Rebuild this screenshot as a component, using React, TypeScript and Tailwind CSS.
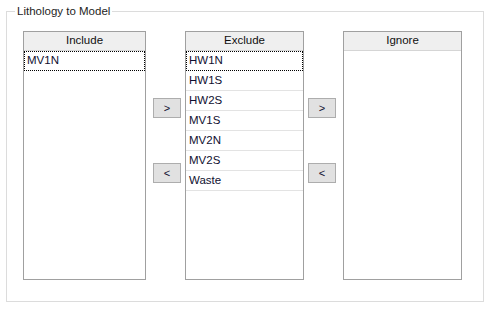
import React from "react";

const exclude = ["HW1N", "HW1S", "HW2S", "MV1S", "MV2N", "MV2S", "Waste"];

function ListBox({ title, items, width }: { title: string; items: string[]; width: string }) {
  return (
    <div className={`${width} h-[249px] border border-[#a0a0a0] bg-white flex flex-col`}>
      <div className="h-[19px] bg-[#efefef] border-b border-[#d5d5d5] flex items-center justify-center text-[11.5px] text-[#101010]">
        {title}
      </div>
      <div className="flex flex-col">
        {items.map((item, i) => (
          <div
            key={item}
            className={`h-[20px] flex items-center pl-[3px] text-[11.5px] text-[#101030] ${
              i === 0 ? "border border-dotted border-black" : "border-b border-[#e3e3e3]"
            }`}
          >
            <span className={i === 0 ? "-ml-px" : ""}>{item}</span>
          </div>
        ))}
      </div>
    </div>
  );
}

function MoveButton({ label }: { label: string }) {
  return (
    <button className="w-[28px] h-[20px] bg-[#e1e1e1] border border-[#adadad] text-[11px] text-[#101030] flex items-center justify-center leading-none">
      {label}
    </button>
  );
}

function ButtonColumn() {
  return (
    <div className="flex flex-col pt-[67px] gap-[45px]">
      <MoveButton label=">" />
      <MoveButton label="<" />
    </div>
  );
}

export default function App() {
  return (
    <div className="w-[491px] h-[309px] bg-white pt-[11px] pl-[6px]" style={{ fontFamily: "'Liberation Sans', Arial, sans-serif" }}>
      <div className="relative w-[478px] h-[291px] border border-[#dcdcdc] pt-[19px] pl-[16px]">
        <div className="absolute left-[8px] -top-[9px] bg-white px-[2px] text-[11.5px] text-[#1e1e1e] leading-[16px]">
          Lithology to Model
        </div>
        <div className="flex">
          <ListBox title="Include" items={["MV1N"]} width="w-[123px]" />
          <div className="ml-[7px] mr-[4px]">
            <ButtonColumn />
          </div>
          <ListBox title="Exclude" items={exclude} width="w-[119px]" />
          <div className="ml-[4px] mr-[7px]">
            <ButtonColumn />
          </div>
          <ListBox title="Ignore" items={[]} width="w-[119px]" />
        </div>
      </div>
    </div>
  );
}
